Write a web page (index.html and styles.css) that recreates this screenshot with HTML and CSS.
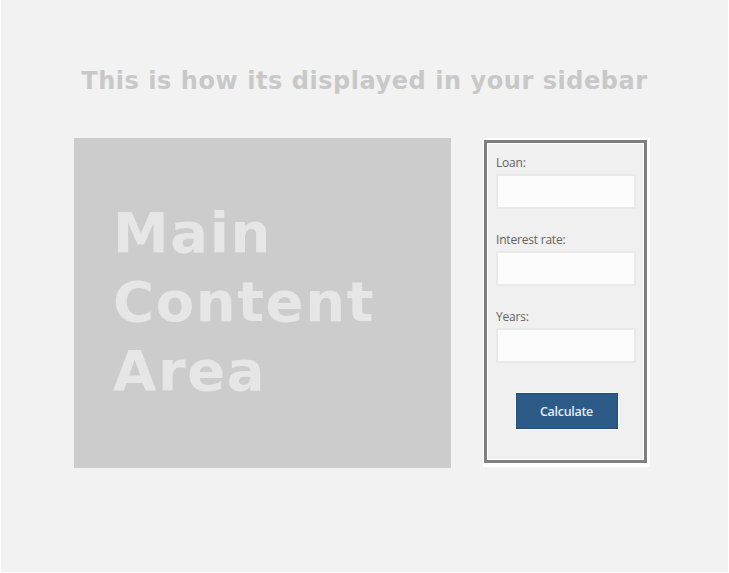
FILE: index.html
```html
<!DOCTYPE html>
<html lang="en">
<head>
<meta charset="utf-8">
<title>Sidebar preview</title>
<link rel="stylesheet" href="styles.css">
</head>
<body>
<div class="page">
  <h1 class="title">This is how its displayed in your sidebar</h1>
  <div class="row">
    <div class="main-area">
      <p class="main-text">Main<br>Content<br>Area</p>
    </div>
    <div class="widget-wrap">
      <form class="widget">
        <label class="field-label" for="loan">Loan:</label>
        <input class="field-input" id="loan" type="text">
        <label class="field-label" for="rate">Interest rate:</label>
        <input class="field-input" id="rate" type="text">
        <label class="field-label" for="years">Years:</label>
        <input class="field-input" id="years" type="text">
        <div class="actions">
          <button class="calc-btn" type="button">Calculate</button>
        </div>
      </form>
    </div>
  </div>
</div>
</body>
</html>
```

FILE: styles.css
```css
html, body {
  margin: 0;
  padding: 0;
  background: #f2f2f2;
}

.page {
  width: 729px;
  height: 573px;
  box-sizing: border-box;
  border: 1px solid #ffffff;
  border-top: 0;
  background: #f2f2f2;
  overflow: hidden;
}

.title {
  margin: 66px 0 0 0;
  font-family: "DejaVu Sans", sans-serif;
  font-weight: 700;
  font-size: 24px;
  line-height: 30px;
  color: #c8c8c8;
  text-align: center;
  letter-spacing: 0.55px;
}

.row {
  display: flex;
  align-items: flex-start;
  margin: 42px 0 0 73px;
  gap: 32px;
}

.main-area {
  width: 377px;
  height: 330px;
  box-sizing: border-box;
  background: #cccccc;
  padding: 60px 0 0 39px;
}

.main-text {
  margin: 0;
  font-family: "DejaVu Sans", sans-serif;
  font-weight: 700;
  font-size: 56px;
  line-height: 69px;
  letter-spacing: 1.6px;
  color: #e6e6e6;
}

.widget-wrap {
  width: 167px;
  height: 329px;
  box-sizing: border-box;
  background: #ffffff;
  padding: 2px 3px 4px 1px;
}

.widget {
  height: 100%;
  box-sizing: border-box;
  border: 3px solid #7f7f7f;
  box-shadow: inset 0 0 0 1px #ffffff;
  background: #f0f0f0;
  padding: 12px 8px 0 9px;
  display: flex;
  flex-direction: column;
}

.field-label {
  display: block;
  font-family: "Open Sans", sans-serif;
  font-size: 12px;
  line-height: 16px;
  color: #66625f;
  letter-spacing: -0.2px;
}

.field-input {
  display: block;
  margin: 3px 0 23px 0;
  width: 140px;
  height: 35px;
  box-sizing: border-box;
  border: 2px solid #e9e9e9;
  background: #fcfcfc;
  padding: 0 6px;
  outline: none;
}

.actions {
  display: flex;
  justify-content: center;
  margin-top: 7px;
  padding-left: 1px;
}

.calc-btn {
  width: 102px;
  height: 36px;
  box-sizing: border-box;
  background: #2c5b88;
  border: 1px solid #234e78;
  box-shadow: 0 0 0 1px #fbfbfb;
  color: #e4ebf2;
  font-family: "Open Sans", sans-serif;
  font-weight: 600;
  font-size: 12.5px;
  letter-spacing: -0.3px;
  padding: 0;
  cursor: pointer;
}
```
